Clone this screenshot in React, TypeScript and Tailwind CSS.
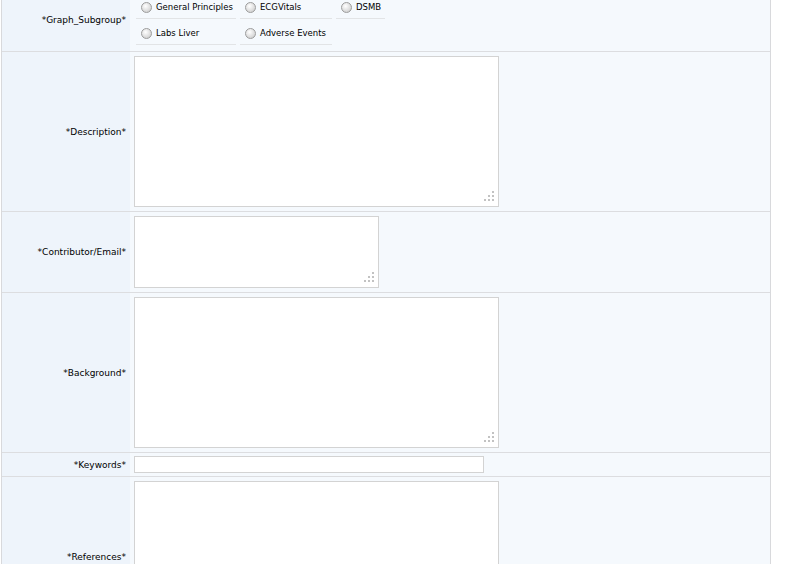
import React from 'react'

const font = { fontFamily: '"DejaVu Sans", Verdana, sans-serif' }

function Radio({ label }: { label: string }) {
  return (
    <div className="flex h-[22px] items-center gap-[4px] border-b border-[#e2e4e6] pl-[5px]">
      <span className="h-[11px] w-[11px] shrink-0 rounded-full border border-[#9c9c9c] bg-[radial-gradient(circle_at_40%_35%,#ffffff,#d6d6d6_70%,#c4c4c4)]" />
      <span className="whitespace-nowrap text-[8.5px] text-black">{label}</span>
    </div>
  )
}

function Grip() {
  return (
    <svg className="absolute bottom-[5px] right-[4px]" width="10" height="10" viewBox="0 0 10 10">
      <rect x="8" y="0" width="2" height="2" fill="#c2c2c2" />
      <rect x="4" y="4" width="2" height="2" fill="#c2c2c2" />
      <rect x="8" y="4" width="2" height="2" fill="#c2c2c2" />
      <rect x="0" y="8" width="2" height="2" fill="#c2c2c2" />
      <rect x="4" y="8" width="2" height="2" fill="#c2c2c2" />
      <rect x="8" y="8" width="2" height="2" fill="#c2c2c2" />
    </svg>
  )
}

function Area({ w, h }: { w: string; h: string }) {
  return (
    <div className={`relative ${w} ${h} border border-[#d3d3d3] bg-white`}>
      <Grip />
    </div>
  )
}

function Row({
  label,
  children,
}: {
  label: string
  children: React.ReactNode
}) {
  return (
    <div className="flex border-b border-[#dcdde0]">
      <div className="flex w-[128px] shrink-0 items-center justify-end bg-[#eef4fb] pr-[4px] pt-[2px] text-[9px] text-black">
        {label}
      </div>
      <div className="flex-1 bg-[#f5f9fd] pl-[4px]">{children}</div>
    </div>
  )
}

export default function App() {
  return (
    <div className="min-h-[564px] overflow-hidden bg-white" style={font}>
      <div className="-mt-[11px] ml-[1px] w-[770px] border-x border-[#d8d9dc]">
        <Row label="*Graph_Subgroup*">
          <div className="pb-[6px] pl-[2px] pt-[4px]">
            <div className="grid grid-cols-[100px_92px_49px] gap-x-[4px] pt-[4px]">
              <Radio label="General Principles" />
              <Radio label="ECGVitals" />
              <Radio label="DSMB" />
            </div>
            <div className="grid grid-cols-[100px_92px_49px] gap-x-[4px] pt-[4px]">
              <Radio label="Labs Liver" />
              <Radio label="Adverse Events" />
            </div>
          </div>
        </Row>
        <Row label="*Description*">
          <div className="py-[4px]">
            <Area w="w-[365px]" h="h-[151px]" />
          </div>
        </Row>
        <Row label="*Contributor/Email*">
          <div className="py-[4px]">
            <Area w="w-[245px]" h="h-[72px]" />
          </div>
        </Row>
        <Row label="*Background*">
          <div className="py-[4px]">
            <Area w="w-[365px]" h="h-[151px]" />
          </div>
        </Row>
        <Row label="*Keywords*">
          <div className="py-[3px]">
            <div className="h-[17px] w-[350px] border border-[#d3d3d3] bg-white" />
          </div>
        </Row>
        <Row label="*References*">
          <div className="py-[4px]">
            <Area w="w-[365px]" h="h-[151px]" />
          </div>
        </Row>
      </div>
    </div>
  )
}
